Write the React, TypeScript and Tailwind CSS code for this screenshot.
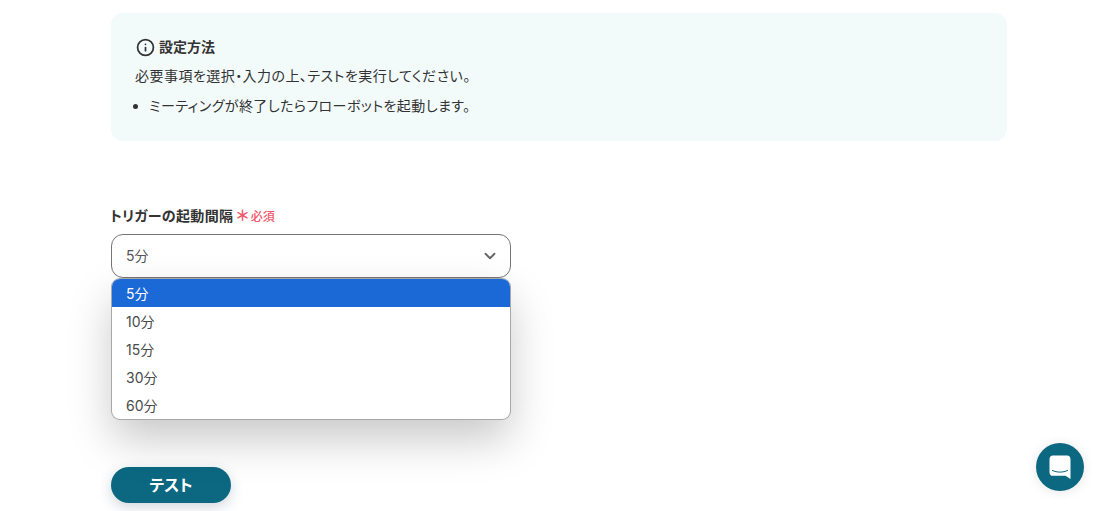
import { ChevronDown, Info } from "lucide-react"

const options = ["5分", "10分", "15分", "30分", "60分"]

function IntercomIcon() {
  return (
    <svg width="22" height="25" viewBox="0 0 22 25" fill="none">
      <path
        d="M0.500 4C0.500 2.100 1.900 0.500 3.800 0.500h14.400c1.900 0 3.300 1.600 3.300 3.500v20l-5-3.200H3.800c-1.900 0-3.300-1.500-3.300-3.400z"
        fill="#ffffff"
      />
      <path d="M3.500 15.500c4.500 2.200 10.500 2.200 15 0" stroke="#0b6880" strokeWidth="1" strokeLinecap="round" />
    </svg>
  )
}

export default function App() {
  return (
    <div
      className="relative h-[511px] w-full overflow-hidden bg-white text-[#333] [font-feature-settings:'palt']"
      style={{ fontFamily: 'Inter, "Noto Sans CJK JP", "Noto Sans", sans-serif' }}
    >
      <div className="ml-[111px] w-[896px] pt-[13px]">
        <div className="h-[128px] rounded-xl bg-[#f2fafa] pl-6 pt-6">
          <div className="flex items-center gap-[4px] pl-[1px] text-[14px] font-bold leading-[20px] text-[#333]">
            <Info className="h-[19px] w-[19px]" strokeWidth={2.200} />
            <span>設定方法</span>
          </div>
          <p className="mt-[9px] text-[14px] leading-[20px] tracking-[0.46px]">必要事項を選択・入力の上、テストを実行してください。</p>
          <ul className="mt-[10px] list-disc pl-[14px] text-[14px] leading-[20px] tracking-[0.44px]">
            <li>ミーティングが終了したらフローボットを起動します。</li>
          </ul>
        </div>

        <div className="mt-[65px] -ml-[1px] flex h-5 items-center text-[14px] font-bold leading-5">
          <span className="tracking-[0.33px]">トリガーの起動間隔</span>
          <span className="ml-[3px] text-[15px] font-bold leading-5 text-[#f1556c]">＊</span>
          <span className="ml-[2px] translate-y-[1px] text-[12px] font-medium text-[#f1556c]">必須</span>
        </div>

        <div className="relative mt-2 w-[400px]">
          <div className="flex h-11 items-center justify-between rounded-xl border border-[#757575] pb-[2px] pl-[14px] pr-[11px] text-[14px] text-[#555]">
            <span>5分</span>
            <ChevronDown className="h-[18px] w-[18px] translate-y-[1px] text-[#666]" strokeWidth={2.500} />
          </div>
          <div className="absolute left-[1px] top-[45px] h-[140px] w-[398px] overflow-hidden rounded-lg bg-white shadow-[0_0_0_1px_#a8a8a8,0_20px_44px_rgba(0,0,0,0.22)]">
            {options.map((o, i) => (
              <div
                key={o}
                className={
                  i === 0
                    ? "flex h-7 items-center bg-[#1a69d6] pl-[14px] text-[14px] text-white"
                    : "flex h-7 items-center pl-[14px] text-[14px] text-[#4a4a4a]"
                }
              >
                {o}
              </div>
            ))}
          </div>
        </div>

        <button className="mt-[189px] flex h-9 w-[120px] items-center justify-center rounded-full bg-[#0b6880] text-[16px] font-bold text-white shadow-[0_4px_14px_rgba(20,50,70,0.2)]">
          テスト
        </button>
      </div>

      <div className="absolute left-[1036px] top-[443px] flex h-12 w-12 items-center justify-center rounded-full bg-[#0b6880] shadow-[0_1px_12px_rgba(0,0,0,0.1)]">
        <IntercomIcon />
      </div>
    </div>
  )
}
